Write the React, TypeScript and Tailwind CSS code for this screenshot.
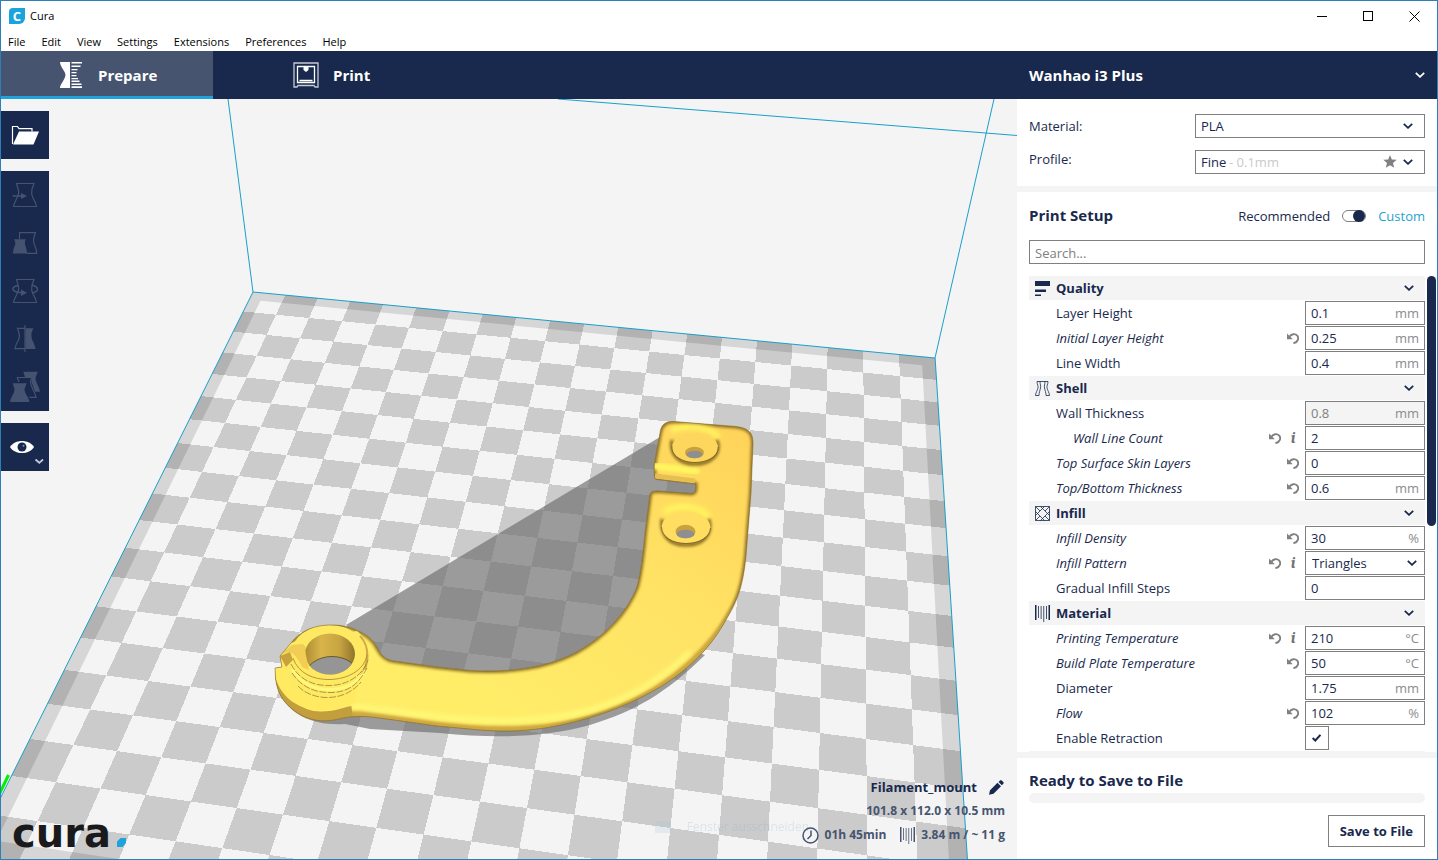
import React, { useId, useState } from "react";
import type { ReactNode } from "react";

type Setting = {
    label: string;
    value: string;
    unit?: string;
    kind?: "text" | "select" | "check";
    changed?: boolean;
    info?: boolean;
    nested?: boolean;
    disabled?: boolean;
};

type Category = { name: string; icon: ReactNode; settings: Setting[] };

const QualityIcon = (
    <svg width="15" height="15" viewBox="0 0 15 15" fill="#18294d" aria-hidden="true">
        <path d="M0 0h15v5H0zM0 8.500h11v2.500H0zM0 13.500h6v1.500H0z" />
    </svg>
);

const ShellIcon = (
    <svg width="15" height="15" viewBox="0 0 15 15" fill="none" stroke="#18294d" strokeWidth=".8" aria-hidden="true">
        <path d="M2 .5h11M13 .5c0 3-1.500 4-1 6.500.4 2 2.500 5 2.500 7.500h-3.500M2 .5c0 3 1.500 4 1 6.500C2.600 9 .5 12 .5 14.500H4M5 .5c0 3 1 4 .5 6.500C5 9.500 4 11.500 4 14.500M10 .5c0 3-1 4-.5 6.500.5 2.500 1.500 4.500 1.500 7.500" />
    </svg>
);

const InfillIcon = (
    <svg width="15" height="15" viewBox="0 0 15 15" fill="none" stroke="#18294d" strokeWidth=".8" aria-hidden="true">
        <path d="M.5.5h14v14H.5zM.5 9.500l9-9M5.500.5l9 9M14.500 5.500l-9 9M9.500 14.500l-9-9M.5.5 5 5M14.500.5 10 5M.5 14.500 5 10M14.500 14.500 10 10" />
    </svg>
);

const MaterialIcon = ({ color = "#18294d" }: { color?: string }) => (
    <svg width="15" height="17" viewBox="0 0 15 17" fill={color} aria-hidden="true">
        <path d="M0 0h1.500v15H0zM3 1h.8v12H3zM5.700 1h.8v13h-.8zM8.400 1h.8v16h-.8zM11 1h.8v13H11zM13.500 0H15v15h-1.500z" />
    </svg>
);

const categories: Category[] = [
    {
        name: "Quality",
        icon: QualityIcon,
        settings: [
            { label: "Layer Height", value: "0.1", unit: "mm" },
            { label: "Initial Layer Height", value: "0.25", unit: "mm", changed: true },
            { label: "Line Width", value: "0.4", unit: "mm" },
        ],
    },
    {
        name: "Shell",
        icon: ShellIcon,
        settings: [
            { label: "Wall Thickness", value: "0.8", unit: "mm", disabled: true },
            { label: "Wall Line Count", value: "2", changed: true, info: true, nested: true },
            { label: "Top Surface Skin Layers", value: "0", changed: true },
            { label: "Top/Bottom Thickness", value: "0.6", unit: "mm", changed: true },
        ],
    },
    {
        name: "Infill",
        icon: InfillIcon,
        settings: [
            { label: "Infill Density", value: "30", unit: "%", changed: true },
            { label: "Infill Pattern", value: "Triangles", kind: "select", changed: true, info: true },
            { label: "Gradual Infill Steps", value: "0" },
        ],
    },
    {
        name: "Material",
        icon: <MaterialIcon />,
        settings: [
            { label: "Printing Temperature", value: "210", unit: "°C", changed: true, info: true },
            { label: "Build Plate Temperature", value: "50", unit: "°C", changed: true },
            { label: "Diameter", value: "1.75", unit: "mm" },
            { label: "Flow", value: "102", unit: "%", changed: true },
            { label: "Enable Retraction", value: "on", kind: "check" },
        ],
    },
];

function Chevron({ className = "" }: { className?: string }) {
    return (
        <svg className={className} width="10" height="6" viewBox="0 0 10 6" fill="none" stroke="currentColor" strokeWidth="1.800" aria-hidden="true">
            <path d="M.8.8 5 4.800 9.200.8" />
        </svg>
    );
}

function SettingRow({ s }: { s: Setting }) {
    const id = useId();

    return (
        <div className="flex h-6 items-center">
            <label htmlFor={id} className={["flex-1 pt-0.5", s.nested ? "pl-11" : "pl-[27px]", s.changed ? "italic" : ""].join(" ")}>
                {s.label}
            </label>
            <div className="mr-1.5 flex items-center gap-1.5">
                {s.changed && (
                    <button type="button" aria-label={`Reset ${s.label}`}>
                        <svg width="12" height="11" viewBox="0 0 12 11" aria-hidden="true">
                            <path d="M0 .5v5.800h5.800z" fill="#808080" />
                            <path d="M2.400 3.800C4.300.8 8 .4 10 2.400c2.300 2.400 1.200 6.800-3.600 7.800" fill="none" stroke="#808080" strokeWidth="1.900" />
                        </svg>
                    </button>
                )}
                {s.info && (
                    <button type="button" aria-label={`About ${s.label}`} className="w-3 text-center font-serif text-base leading-4 font-bold text-[#707070] italic">
                        i
                    </button>
                )}
            </div>
            <div className="relative h-6 w-[120px] shrink-0">
                {s.kind === "check" ? (
                    <>
                        <input id={id} type="checkbox" defaultChecked className="peer block h-6 w-6 appearance-none border border-[#7f7f7f] bg-white" />
                        <svg className="pointer-events-none absolute top-2 left-[7px] hidden peer-checked:block" width="9" height="8" viewBox="0 0 9 8" fill="none" stroke="#18294d" strokeWidth="2" aria-hidden="true">
                            <path d="M.6 4 3.300 6.500 8.400.8" />
                        </svg>
                    </>
                ) : s.kind === "select" ? (
                    <>
                        <select id={id} defaultValue={s.value} className="h-6 w-full appearance-none border border-[#7f7f7f] bg-white px-1.5 pt-0.5">
                            <option>Triangles</option>
                            <option>Grid</option>
                            <option>Lines</option>
                        </select>
                        <Chevron className="pointer-events-none absolute top-[9px] right-2" />
                    </>
                ) : (
                    <>
                        <input
                            id={id}
                            defaultValue={s.value}
                            disabled={s.disabled}
                            className="h-6 w-full border border-[#7f7f7f] bg-white px-[5px] disabled:bg-[#f4f4f4] disabled:text-[#808080]"
                        />
                        {s.unit && <span className="pointer-events-none absolute top-0 right-1.5 leading-6 text-[#8c8c8c]">{s.unit}</span>}
                    </>
                )}
            </div>
        </div>
    );
}

/* ---- 3D scene ---- */

// Perspective projection of the build plate, one unit per checker cell.
function project(i: number, j: number): string {
    const w = 1 - 0.00284 * i - 0.01594 * j;
    const x = (253 + 31.45 * i - 13.6 * j) / w;
    const y = (292 + 2.284 * i + 14.515 * j) / w;
    return `${x.toFixed(1)} ${y.toFixed(1)}`;
}

function quad(i0: number, j0: number, i1: number, j1: number): string {
    return `M${project(i0, j0)}L${project(i1, j0)}L${project(i1, j1)}L${project(i0, j1)}Z`;
}

const SIZE = 20;

const darkCells = Array.from({ length: SIZE * SIZE }, (_, n) => [n % SIZE, Math.floor(n / SIZE)])
    .filter(([i, j]) => (i + j) % 2 === 1)
    .map(([i, j]) => quad(i, j, i + 1, j + 1))
    .join("");

const bodyPath =
    "M660 433C661 425 665 421 674 421.500L736 426.500C748 428 753 432 753 443L751 493L746 556C743 585 738 600 727 618C712 646 690 670 655 690C620 710 585 721 548 727.500C520 732 500 731.500 480 730L437 726L383 718.500C366 716 354 715.500 341 718.500C322 723.500 306 720.500 292 709C281 700 277 690 275.500 678L275 668L282 667L280 656L291 643C300 631 314 625 331 625C342 625 351 627 357 630.500C369 635 375 643 378 649C382 657 387 660 394 661L437 667L470 670.500C512 672.500 545 668 575 653C606 636 627 612 637 587C641 572 643 555 645 533L650 494.500C651 491.500 653 491 658 491L692 493.500C695 493 696 491 695.500 484L656 479.500C654 478 654 476 654.500 463Z";

function Scene() {
    return (
        <svg className="absolute inset-0 h-full w-full" viewBox="1 99 1016 760" preserveAspectRatio="xMinYMin slice" role="img" aria-label="Filament_mount on the build plate">
            <defs>
                <linearGradient id="body" x1="720" y1="425" x2="500" y2="720" gradientUnits="userSpaceOnUse">
                    <stop offset="0" stopColor="#ffd45b" />
                    <stop offset=".45" stopColor="#ffe264" />
                    <stop offset="1" stopColor="#ffed68" />
                </linearGradient>
                <linearGradient id="bore" x1="303" x2="355" y1="0" y2="0" gradientUnits="userSpaceOnUse">
                    <stop offset="0" stopColor="#a9892f" />
                    <stop offset=".35" stopColor="#d8b44a" />
                    <stop offset=".7" stopColor="#c9a541" />
                    <stop offset="1" stopColor="#8d742c" />
                </linearGradient>
                <clipPath id="bodyClip">
                    <path d={bodyPath} />
                </clipPath>
                <clipPath id="boreClip">
                    <ellipse cx="330" cy="654" rx="25" ry="20.500" />
                </clipPath>
                <filter id="soft" x="-20%" y="-50%" width="140%" height="200%">
                    <feGaussianBlur stdDeviation="1.500" />
                </filter>
                <filter id="softer" x="-20%" y="-60%" width="140%" height="220%">
                    <feGaussianBlur stdDeviation="2.200" />
                </filter>
            </defs>

            <path d={darkCells} fill="#cbcbcb" shapeRendering="crispEdges" />
            <path d={quad(0, 0, 20, 20) + quad(0.35, 0.4, 19.63, 19.6)} fill="#000" fillOpacity=".12" fillRule="evenodd" />

            <g fill="none" stroke="#1b9fc9" strokeWidth="1">
                <path d={`M${project(20, 20)}L${project(20, 0)}L${project(0, 0)}L${project(0, 20)}`} />
                <path d="M228 99 253 292M994 99 935 358M558 99l459 36.500" />
            </g>
            <path d="M8.500 775-1 795" stroke="#00f000" strokeWidth="3" />

            <g fill="#6b6b6b" fillOpacity=".65">
                <path d="M660 437 346 625 378 660 480 690 600 680 650 630 670 560 700 500 700 478 670 470Z" />
                <path d="M279 692C290 716 315 726 345 724L370 729 440 733C500 739 545 737 590 725C635 711 665 694 705 655L690 650 500 715 350 700Z" />
            </g>

            <path d={bodyPath} fill="url(#body)" />
            <g clipPath="url(#bodyClip)" fill="none">
                <path d={bodyPath} stroke="#8f6f20" strokeWidth="4" filter="url(#soft)" />
                <path d="M274 680C281 704 300 718 320 718C338 718 346 713 360 714L437 725C500 733 560 729 600 718C650 700 700 665 735 610" stroke="#d0a840" strokeWidth="7" filter="url(#soft)" />
                <path d="M352 706 437 716.500C500 724 550 721 590 710C625 700 660 681 690 652" stroke="#fff978" strokeWidth="5" filter="url(#softer)" />
                <path d="M274 678C280 702 300 716 320 716.500C336 717 344 712 352 711" stroke="#c39e3c" strokeWidth="10" />
                <path d="M273 667C277 697 298 710 320 710C336 710 345 705 355 703L360 660 282 640Z" fill="#ffea62" />
                <path d="M671 431C686 423 712 427 719 438" stroke="#fff35f" strokeWidth="6" filter="url(#softer)" />
                <path d="M655 466 696 471" stroke="#fff560" strokeWidth="7" strokeLinecap="round" filter="url(#soft)" />
                <path d="M655 476 695 481" stroke="#e6bf52" strokeWidth="5" />
                <path d="M697.500 477V492" stroke="#9b7c2b" strokeWidth="3" filter="url(#soft)" />
                <path d="M664 513C675 503 701 505 709 518" stroke="#fff35f" strokeWidth="7" filter="url(#softer)" />
            </g>

            {/* screw recesses */}
            <g>
                <path d="M672 440C669 455 680 464 695 464S722 455 717 440" fill="none" stroke="#7a5f1d" strokeWidth="3" filter="url(#soft)" />
                <ellipse cx="695" cy="447.500" rx="23" ry="14.500" fill="#fdd75d" />
                <path d="M672 446C671 456 682 462.500 695 462.500S719 456 718 447" fill="none" stroke="#755d20" strokeWidth=".8" />
                <ellipse cx="694.500" cy="452.500" rx="9.500" ry="5.800" fill="#c9a23f" />
                <ellipse cx="694.500" cy="454.500" rx="8" ry="3.800" fill="#8f8f8f" />
                <path d="M662 519C660 536 670 545 686 545S713 536 709 519" fill="none" stroke="#7a5f1d" strokeWidth="3" filter="url(#soft)" />
                <ellipse cx="686" cy="527.500" rx="24.500" ry="15.500" fill="#ffde62" />
                <path d="M661.500 527C662 537 672 543.500 686 543.500S710 537 710.500 528" fill="none" stroke="#755d20" strokeWidth=".8" />
                <ellipse cx="685.500" cy="531.500" rx="10" ry="6.800" fill="#c9a23f" />
                <ellipse cx="685.500" cy="534" rx="9" ry="4.300" fill="#8f8f8f" />
            </g>

            {/* threaded hub */}
            <g>
                <path d="M357 631C371 642 372 662 363 677C352 692 345 698 326 699C306 699 292 690 287 673L293 642Z" fill="#fdea64" />
                <path d="M360 636C370 648 369 664 361 676" fill="none" stroke="#d1a947" strokeWidth="2.500" />
                <ellipse cx="329" cy="652" rx="37" ry="27" fill="#ffe962" />
                <path d="M293 658C298 673 313 680 330 679.500S364 671 367 655" fill="none" stroke="#b08c30" strokeWidth=".9" />
                <path d="M292 669C301 684 316 690 331 689.500S358 683 366 670" fill="none" stroke="#fff87a" strokeWidth="3" />
                <g fill="none" stroke="#9f7f2c" strokeWidth=".8" strokeDasharray="7 1.500">
                    <path d="M291 664C299 680 314 686 330 685.500S362 677 368 660" />
                    <path d="M292 673C302 688 316 693 332 692.500S358 685 367 668" />
                    <path d="M298 686C312 701 344 703 361 682" />
                </g>
                <path d="M281 654 292 645 303 644 308 650 302 660 290 652Z" fill="#f0cd57" />
                <path d="M280 656 290 652 293 660 286 667Z" fill="#c9a23e" />
                <ellipse cx="330" cy="654" rx="25" ry="20.500" fill="url(#bore)" />
                <path d="M292 646 304 645 309 670 302 667C298 657 291 653 291 648Z" fill="#f1cd55" />
                <g clipPath="url(#boreClip)">
                    <ellipse cx="332" cy="677" rx="27" ry="20.500" fill="#959595" stroke="#54471f" strokeWidth=".8" />
                </g>
            </g>
            <path d={bodyPath} fill="none" stroke="#6e5820" strokeOpacity=".7" strokeWidth=".7" />
        </svg>
    );
}

/* ---- tool bar ---- */

function ToolIcon({ children, dim = false }: { children: ReactNode; dim?: boolean }) {
    return (
        <svg width="48" height="48" viewBox="0 0 48 48" fill="none" className={dim ? "text-[#465370]" : "text-white"} stroke="currentColor" strokeWidth="1.200" aria-hidden="true">
            {children}
        </svg>
    );
}

const block = "M15.500 12.500H33L31 18C30 22 30.500 24 32 27C33.500 30 35 32 35.500 35.500H12.500C13 32 15 29 16.500 26C18 23 18 20 17 17.500Z";

const tools: { name: string; icon: ReactNode }[] = [
    {
        name: "Move",
        icon: (
            <>
                <path d={block} />
                <path d="M11.500 25H22" strokeWidth="1.500" />
                <path d="M20 22 26 25 20 28Z" fill="currentColor" stroke="none" />
            </>
        ),
    },
    {
        name: "Scale",
        icon: (
            <>
                <path d="M18.500 20V13.700H34.500L33 18C32 21 32 23 33.500 26C35 29 35.500 31 35.700 34.300H26" />
                <path d="M13 20.300H24.700C23.500 23 23.500 25.500 25 28.500L26.300 34.500H11.700L13 28.500C15 25 14.500 23 13 20.300Z" fill="currentColor" stroke="none" />
            </>
        ),
    },
    {
        name: "Rotate",
        icon: (
            <>
                <path d={block} />
                <path d="M17 18.500C9 20 10 25.500 22 25.700M31 18C38 20 38.500 24.500 31 26" strokeWidth="1.500" />
                <path d="M20 22.500 26 25.700 20 29Z" fill="currentColor" stroke="none" />
            </>
        ),
    },
    {
        name: "Mirror",
        icon: (
            <>
                <path d="M24 10V37" />
                <path d="M24 13.300H16.500L18 18C19 21 18.500 23 17 26C15 29 14.500 31 14 33.700H24" />
                <path d="M24.500 13.300H32.300L30.500 18C30 22 31 25 32.500 27.500L34.700 34H24.500Z" fill="currentColor" stroke="none" />
            </>
        ),
    },
    {
        name: "Per Model Settings",
        icon: (
            <>
                <path d="M22.300 8.700H36.700L34.500 15C34.500 19 38 23 39 28.700H34L30.500 19V14H24Z" fill="currentColor" stroke="none" />
                <path d="M18 19 16.300 14.500H30.500L29.500 19C29.500 24 34 28 35 34.300H28.500" />
                <path d="M11.700 20.300H25.700L23.500 26C23.500 31 27.500 33 28.500 39H9C10 33 13.500 31 13.500 26Z" fill="currentColor" stroke="none" />
            </>
        ),
    },
];

function Toolbar() {
    return (
        <div className="flex w-12 flex-col gap-3">
            <button type="button" aria-label="Open File" className="bg-[#18294d]">
                <ToolIcon>
                    <path d="M11.500 33V15.500H16.500L18 17.700H31V20.500" />
                    <path d="M18 20.500H38L32.500 33.500H12Z" fill="currentColor" stroke="none" />
                </ToolIcon>
            </button>
            <div className="flex flex-col bg-[#18294d]">
                {tools.map((t) => (
                    <button key={t.name} type="button" aria-label={t.name} disabled>
                        <ToolIcon dim>{t.icon}</ToolIcon>
                    </button>
                ))}
            </div>
            <button type="button" aria-label="View Mode" className="bg-[#18294d]">
                <ToolIcon>
                    <path d="M9 24C14 16 28 16 33 24C28 32 14 32 9 24Z" fill="currentColor" stroke="none" />
                    <circle cx="21" cy="24" r="4.500" fill="#18294d" stroke="none" />
                    <circle cx="22.500" cy="22.800" r="1" fill="#8c95a8" stroke="none" />
                    <path d="M34.500 36.500 38.300 39.800 42 36.500" stroke="#c3c9d4" strokeWidth="1.800" />
                </ToolIcon>
            </button>
        </div>
    );
}

function Viewport() {
    return (
        <main className="relative flex flex-1 flex-col justify-between overflow-hidden bg-[#f4f4f4] pt-3">
            <Scene />
            <div className="relative">
                <Toolbar />
            </div>
            <div className="pointer-events-none absolute right-[208px] bottom-[22px] flex items-center gap-4 text-xs leading-5 text-[#7fa6bd] opacity-20">
                <span className="h-3 w-4 bg-[#9fc7dd]" />
                Fenster ausschneiden
            </div>
            <div className="relative flex items-end justify-between pr-3 pb-3 pl-[11px]">
                <div className="flex items-end gap-1.5">
                    <span className="font-['DejaVu_Sans',sans-serif] text-[40px] leading-[28px] font-bold text-[#1a1a1c]">cura</span>
                    <svg width="9" height="9" viewBox="0 0 9 9" fill="#1fa3dc" aria-hidden="true">
                        <path d="M3.500 0H9V5L5.500 9H0V3.500Z" />
                    </svg>
                </div>
                <div className="flex flex-col items-end text-xs leading-[24px] font-bold text-[#475470]">
                    <div className="flex items-center gap-3 text-[13px] leading-[24px] text-[#18294d]">
                        Filament_mount
                        <button type="button" aria-label="Rename job">
                            <svg width="16" height="15" viewBox="0 0 16 15" fill="#18294d" aria-hidden="true">
                                <path d="M0 14.800 1 10.300 8.500 2.800 12 6.300 4.500 13.700ZM9.500 1.900 11 .5C11.500 0 12.200 0 12.700.5L14.300 2.100C14.800 2.600 14.800 3.300 14.300 3.800L12.900 5.300Z" />
                            </svg>
                        </button>
                    </div>
                    <div>101.8 x 112.0 x 10.5 mm</div>
                    <div className="flex items-center gap-1.5">
                        <svg width="17" height="17" viewBox="0 0 17 17" fill="none" stroke="#475470" strokeWidth="1.500" aria-hidden="true">
                            <circle cx="8.500" cy="8.500" r="7.500" />
                            <path d="M9 3.500V8.500L5.500 12" />
                        </svg>
                        <span>01h 45min</span>
                        <span className="ml-2">
                            <MaterialIcon color="#475470" />
                        </span>
                        <span>3.84 m / ~ 11 g</span>
                    </div>
                </div>
            </div>
        </main>
    );
}

/* ---- side bar ---- */

function Sidebar() {
    const [custom, setCustom] = useState(true);

    return (
        <aside className="flex w-[420px] shrink-0 flex-col gap-1.5 bg-[#f4f4f4]">
            <section className="flex justify-between bg-white px-3 pt-[15px] pb-3">
                <div className="flex flex-col gap-[9px] leading-6">
                    <label htmlFor="material">Material:</label>
                    <label htmlFor="profile">Profile:</label>
                </div>
                <div className="flex w-[230px] flex-col gap-3">
                    <div className="relative h-6">
                        <select id="material" className="h-6 w-full appearance-none border border-[#7f7f7f] bg-white px-[5px] pt-0.5">
                            <option>PLA</option>
                            <option>ABS</option>
                        </select>
                        <Chevron className="pointer-events-none absolute top-[9px] right-3" />
                    </div>
                    <div className="relative h-6">
                        <select id="profile" className="h-6 w-full appearance-none border border-[#7f7f7f] bg-white px-[5px] pt-0.5">
                            <option>Fine</option>
                            <option>Normal</option>
                        </select>
                        <span className="pointer-events-none absolute top-0 left-[34px] leading-6 text-[#cacaca]">- 0.1mm</span>
                        <svg className="pointer-events-none absolute top-[5px] right-7" width="14" height="13" viewBox="0 0 14 13" fill="#808080" aria-hidden="true">
                            <path d="M7 0 8.800 4.400 13.700 4.800 10 8 11.200 12.800 7 10.200 2.800 12.800 4 8 .3 4.800 5.200 4.400Z" />
                        </svg>
                        <Chevron className="pointer-events-none absolute top-[9px] right-3" />
                    </div>
                </div>
            </section>

            <section className="flex flex-1 flex-col gap-3 bg-white pt-3">
                <div className="flex h-6 items-center px-3">
                    <h2 className="flex-1 pb-0.5 text-[15px] font-bold">Print Setup</h2>
                    <label htmlFor="mode" className="pt-0.5">
                        Recommended
                    </label>
                    <input
                        id="mode"
                        type="checkbox"
                        role="switch"
                        checked={custom}
                        onChange={(e) => setCustom(e.target.checked)}
                        className="mx-3 flex h-3 w-6 appearance-none items-center rounded-full border border-[#7f7f7f] bg-white before:h-3 before:w-3 before:shrink-0 before:rounded-full before:bg-[#18294d] checked:justify-end"
                    />
                    <button type="button" className="pt-0.5 text-[#1fa3cc]" onClick={() => setCustom(true)}>
                        Custom
                    </button>
                </div>
                <div className="px-3">
                    <input
                        type="search"
                        aria-label="Search settings"
                        placeholder="Search..."
                        className="block h-6 w-full border border-[#7f7f7f] px-[5px] pt-0.5 placeholder:text-[#808080]"
                    />
                </div>
                <div className="flex flex-1 pl-3">
                    <div className="flex flex-1 flex-col gap-px">
                        {categories.map((c) => (
                            <React.Fragment key={c.name}>
                                <button type="button" aria-expanded="true" className="flex h-6 items-center gap-1.5 bg-[#f4f4f4] pr-[11px] pl-1.5 text-left font-bold">
                                    {c.icon}
                                    <span className="flex-1 pt-0.5">{c.name}</span>
                                    <Chevron />
                                </button>
                                {c.settings.map((s) => (
                                    <SettingRow key={s.label} s={s} />
                                ))}
                            </React.Fragment>
                        ))}
                        <div className="h-px bg-[#f4f4f4]" />
                    </div>
                    <div className="ml-0.5 w-[10px] pr-px">
                        <div className="h-[250px] rounded-full bg-[#18294d]" />
                    </div>
                </div>
            </section>

            <section className="flex flex-col bg-white px-3 pt-3 pb-3">
                <h2 className="text-[15px] leading-[20px] font-bold">Ready to Save to File</h2>
                <div role="progressbar" aria-label="Slicing progress" aria-valuenow={0} className="mt-[3px] h-2.5 rounded-full bg-[#f4f4f4]" />
                <button type="button" className="mt-3 h-8 self-end border border-[#7f7f7f] bg-white px-[11px] pt-0.5 font-bold">
                    Save to File
                </button>
            </section>
        </aside>
    );
}

export default function App() {
    return (
        <div className="flex min-h-screen flex-col border border-[#2d7fb8] bg-white font-['Open_Sans',sans-serif] text-[13px] text-[#18294d]">
            <header className="text-[11px] text-black">
                <div className="flex h-[30px] items-center">
                    <span className="ml-2 flex h-4 w-4 items-center justify-center rounded-tl rounded-br-md bg-[#1aa3dc] text-[13px] leading-4 font-bold text-white" aria-hidden="true">
                        C
                    </span>
                    <span className="ml-[5px] flex-1">Cura</span>
                    <button type="button" aria-label="Minimize" className="flex h-full w-[46px] items-center justify-center">
                        <span className="h-px w-2.5 bg-black" />
                    </button>
                    <button type="button" aria-label="Maximize" className="flex h-full w-[46px] items-center justify-center">
                        <span className="h-2.5 w-2.5 border border-black" />
                    </button>
                    <button type="button" aria-label="Close" className="flex h-full w-[46px] items-center justify-center">
                        <svg width="11" height="11" viewBox="0 0 11 11" stroke="#000" aria-hidden="true">
                            <path d="M.5.5l10 10M10.500.5l-10 10" />
                        </svg>
                    </button>
                </div>
                <nav className="flex h-5 items-center gap-4 pt-0.5 pl-[7px]" aria-label="Menu">
                    {["File", "Edit", "View", "Settings", "Extensions", "Preferences", "Help"].map((m) => (
                        <button key={m} type="button">
                            {m}
                        </button>
                    ))}
                </nav>
            </header>

            <div className="flex h-12 bg-[#18294d] text-[15px] font-bold text-white">
                <button type="button" className="flex w-[212px] items-center gap-[15px] border-b-[3px] border-[#1fa3dc] bg-[#475470] pt-[3px] pl-[59px]">
                    <svg width="23" height="26" viewBox="0 0 23 26" fill="#fff" aria-hidden="true">
                        <path d="M0 0H10V26H0C0 22 5 18 5.500 13C5.500 9 0 5 0 0Z" />
                        <path d="M11.500 0H22v1.500H11.500zM11.500 3.500h9V5h-9zM11.500 7h6v1.200h-6zM11.500 10h5v1.200h-5zM11.500 13h5v1.200h-5zM11.500 16h6.500v1.200h-6.500zM11.500 18.500h8v1.500h-8zM11.500 21.500h10V23h-10zM11.500 24.300H22V26H11.500z" />
                    </svg>
                    Prepare
                </button>
                <button type="button" className="flex items-center gap-3.5 pl-20">
                    <svg width="26" height="26" viewBox="0 0 26 26" fill="none" stroke="#fff" strokeWidth="1.300" aria-hidden="true">
                        <path d="M1 1H25V25H22L21 23.500H5L4 25H1Z" stroke="#c5cad6" />
                        <path d="M4.500 4.500H21.500V20.500H4.500ZM6.500 18.500H19.500" />
                        <path d="M10.500 5H15.500V8L13 10 10.500 8Z" fill="#fff" stroke="none" />
                    </svg>
                    Print
                </button>
                <button type="button" className="ml-auto flex w-[420px] items-center justify-between px-3">
                    Wanhao i3 Plus
                    <Chevron />
                </button>
            </div>

            <div className="flex flex-1">
                <Viewport />
                <Sidebar />
            </div>
        </div>
    );
}
